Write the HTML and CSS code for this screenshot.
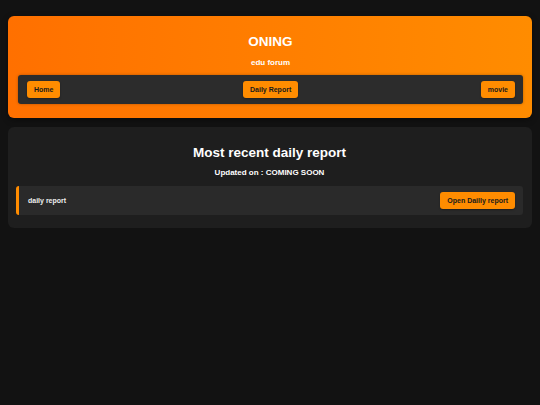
FILE: index.html
```html
<!DOCTYPE html>
<html>
<head>
<meta charset="utf-8">
<link rel="stylesheet" href="styles.css">
</head>
<body>
<div class="page">
  <header class="hero">
    <h1 class="hero-title">ONING</h1>
    <p class="hero-sub">edu forum</p>
    <nav class="nav">
      <a class="btn">Home</a>
      <a class="btn">Daily Report</a>
      <a class="btn">movie</a>
    </nav>
  </header>
  <section class="card">
    <h2 class="card-title">Most recent daily report</h2>
    <p class="card-sub">Updated on : COMING SOON</p>
    <div class="item">
      <span class="item-label">daily report</span>
      <a class="btn btn-item">Open Dailly report</a>
    </div>
  </section>
</div>
</body>
</html>
```

FILE: styles.css
```css
html, body {
  margin: 0;
  background: #121212;
  font-family: "Liberation Sans", Arial, sans-serif;
  color: #fff;
}
.page {
  padding: 16px 8px;
  display: flex;
  flex-direction: column;
  gap: 9px;
}
.hero {
  background: linear-gradient(90deg, #ff7000 0%, #ff8c00 100%);
  border-radius: 6px;
  padding: 17px 9px 14px 10px;
  box-shadow: 0 2px 6px rgba(0,0,0,0.4);
}
.hero-title {
  margin: 0;
  text-align: center;
  font-size: 13.5px;
  line-height: 18px;
  font-weight: bold;
}
.hero-sub {
  margin: 7px 0 0;
  text-align: center;
  font-size: 8px;
  line-height: 10px;
  font-weight: bold;
}
.nav {
  margin-top: 7px;
  background: #2c2c2c;
  border-radius: 3px;
  padding: 6px 8px 6px 9px;
  display: flex;
  justify-content: space-between;
  align-items: center;
  box-shadow: 0 0 3px rgba(0,0,0,0.3);
}
.btn {
  display: inline-block;
  background: #ff8c00;
  color: #1a1a1a;
  font-size: 7px;
  font-weight: bold;
  line-height: 9px;
  padding: 4px 7px;
  border-radius: 3px;
  box-shadow: 0 1px 2px rgba(0,0,0,0.3);
}
.card {
  background: #1e1e1e;
  border-radius: 6px;
  padding: 17px 9px 13px 8px;
}
.card-title {
  margin: 0;
  text-align: center;
  font-size: 13.5px;
  line-height: 18px;
  font-weight: bold;
}
.card-sub {
  margin: 6px 0 0;
  text-align: center;
  font-size: 8px;
  line-height: 10px;
  font-weight: bold;
}
.item {
  margin-top: 8px;
  background: #2a2a2a;
  border-left: 3px solid #ff8c00;
  border-radius: 3px;
  padding: 6px 8px 6px 9px;
  display: flex;
  justify-content: space-between;
  align-items: center;
}
.item-label {
  font-size: 7px;
  font-weight: bold;
  color: #eee;
}
```
